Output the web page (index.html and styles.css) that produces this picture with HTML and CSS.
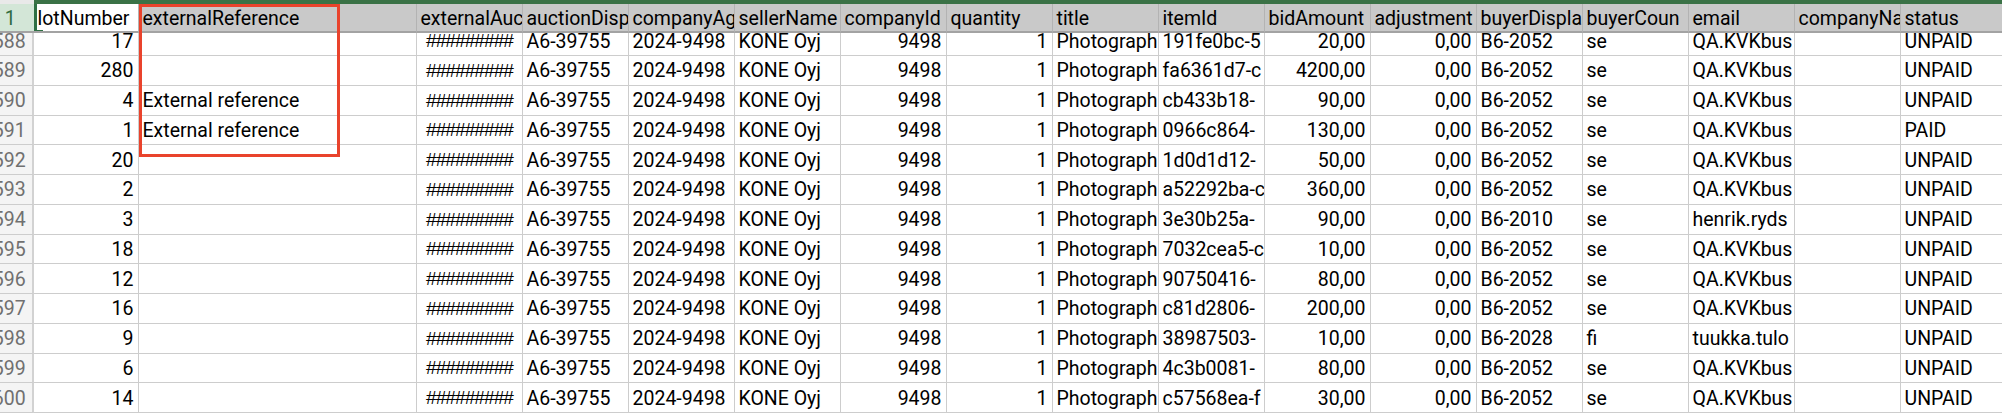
FILE: index.html
```html
<!DOCTYPE html>
<html lang="en">
<head>
<meta charset="utf-8">
<title>Sheet</title>
<link rel="stylesheet" href="styles.css">
</head>
<body>
<div class="topbar"><div class="corner"></div><div class="greenbar"></div></div>
<div class="sheet">
  <div class="row head">
    <div class="rh rh-active">1</div>
    <div class="c active">lotNumber</div>
    <div class="c">externalReference</div>
    <div class="c">externalAuc</div>
    <div class="c">auctionDisp</div>
    <div class="c">companyAg</div>
    <div class="c">sellerName</div>
    <div class="c">companyId</div>
    <div class="c">quantity</div>
    <div class="c">title</div>
    <div class="c">itemId</div>
    <div class="c">bidAmount</div>
    <div class="c">adjustment</div>
    <div class="c">buyerDispla</div>
    <div class="c">buyerCoun</div>
    <div class="c">email</div>
    <div class="c">companyNa</div>
    <div class="c">status</div>
  </div>
  <div class="viewport">
    <div class="rows">
      <div class="row"><div class="rh">588</div><div class="c n">17</div><div class="c"></div><div class="c hash">#########</div><div class="c">A6-39755</div><div class="c">2024-9498</div><div class="c">KONE Oyj</div><div class="c n">9498</div><div class="c n">1</div><div class="c">Photograph</div><div class="c">191fe0bc-5</div><div class="c n">20,00</div><div class="c n">0,00</div><div class="c">B6-2052</div><div class="c">se</div><div class="c">QA.KVKbus</div><div class="c"></div><div class="c">UNPAID</div></div>
      <div class="row"><div class="rh">589</div><div class="c n">280</div><div class="c"></div><div class="c hash">#########</div><div class="c">A6-39755</div><div class="c">2024-9498</div><div class="c">KONE Oyj</div><div class="c n">9498</div><div class="c n">1</div><div class="c">Photograph</div><div class="c">fa6361d7-c</div><div class="c n">4200,00</div><div class="c n">0,00</div><div class="c">B6-2052</div><div class="c">se</div><div class="c">QA.KVKbus</div><div class="c"></div><div class="c">UNPAID</div></div>
      <div class="row"><div class="rh">590</div><div class="c n">4</div><div class="c">External reference</div><div class="c hash">#########</div><div class="c">A6-39755</div><div class="c">2024-9498</div><div class="c">KONE Oyj</div><div class="c n">9498</div><div class="c n">1</div><div class="c">Photograph</div><div class="c">cb433b18-</div><div class="c n">90,00</div><div class="c n">0,00</div><div class="c">B6-2052</div><div class="c">se</div><div class="c">QA.KVKbus</div><div class="c"></div><div class="c">UNPAID</div></div>
      <div class="row"><div class="rh">591</div><div class="c n">1</div><div class="c">External reference</div><div class="c hash">#########</div><div class="c">A6-39755</div><div class="c">2024-9498</div><div class="c">KONE Oyj</div><div class="c n">9498</div><div class="c n">1</div><div class="c">Photograph</div><div class="c">0966c864-</div><div class="c n">130,00</div><div class="c n">0,00</div><div class="c">B6-2052</div><div class="c">se</div><div class="c">QA.KVKbus</div><div class="c"></div><div class="c">PAID</div></div>
      <div class="row"><div class="rh">592</div><div class="c n">20</div><div class="c"></div><div class="c hash">#########</div><div class="c">A6-39755</div><div class="c">2024-9498</div><div class="c">KONE Oyj</div><div class="c n">9498</div><div class="c n">1</div><div class="c">Photograph</div><div class="c">1d0d1d12-</div><div class="c n">50,00</div><div class="c n">0,00</div><div class="c">B6-2052</div><div class="c">se</div><div class="c">QA.KVKbus</div><div class="c"></div><div class="c">UNPAID</div></div>
      <div class="row"><div class="rh">593</div><div class="c n">2</div><div class="c"></div><div class="c hash">#########</div><div class="c">A6-39755</div><div class="c">2024-9498</div><div class="c">KONE Oyj</div><div class="c n">9498</div><div class="c n">1</div><div class="c">Photograph</div><div class="c">a52292ba-c</div><div class="c n">360,00</div><div class="c n">0,00</div><div class="c">B6-2052</div><div class="c">se</div><div class="c">QA.KVKbus</div><div class="c"></div><div class="c">UNPAID</div></div>
      <div class="row"><div class="rh">594</div><div class="c n">3</div><div class="c"></div><div class="c hash">#########</div><div class="c">A6-39755</div><div class="c">2024-9498</div><div class="c">KONE Oyj</div><div class="c n">9498</div><div class="c n">1</div><div class="c">Photograph</div><div class="c">3e30b25a-</div><div class="c n">90,00</div><div class="c n">0,00</div><div class="c">B6-2010</div><div class="c">se</div><div class="c">henrik.ryds</div><div class="c"></div><div class="c">UNPAID</div></div>
      <div class="row"><div class="rh">595</div><div class="c n">18</div><div class="c"></div><div class="c hash">#########</div><div class="c">A6-39755</div><div class="c">2024-9498</div><div class="c">KONE Oyj</div><div class="c n">9498</div><div class="c n">1</div><div class="c">Photograph</div><div class="c">7032cea5-c</div><div class="c n">10,00</div><div class="c n">0,00</div><div class="c">B6-2052</div><div class="c">se</div><div class="c">QA.KVKbus</div><div class="c"></div><div class="c">UNPAID</div></div>
      <div class="row"><div class="rh">596</div><div class="c n">12</div><div class="c"></div><div class="c hash">#########</div><div class="c">A6-39755</div><div class="c">2024-9498</div><div class="c">KONE Oyj</div><div class="c n">9498</div><div class="c n">1</div><div class="c">Photograph</div><div class="c">90750416-</div><div class="c n">80,00</div><div class="c n">0,00</div><div class="c">B6-2052</div><div class="c">se</div><div class="c">QA.KVKbus</div><div class="c"></div><div class="c">UNPAID</div></div>
      <div class="row"><div class="rh">597</div><div class="c n">16</div><div class="c"></div><div class="c hash">#########</div><div class="c">A6-39755</div><div class="c">2024-9498</div><div class="c">KONE Oyj</div><div class="c n">9498</div><div class="c n">1</div><div class="c">Photograph</div><div class="c">c81d2806-</div><div class="c n">200,00</div><div class="c n">0,00</div><div class="c">B6-2052</div><div class="c">se</div><div class="c">QA.KVKbus</div><div class="c"></div><div class="c">UNPAID</div></div>
      <div class="row"><div class="rh">598</div><div class="c n">9</div><div class="c"></div><div class="c hash">#########</div><div class="c">A6-39755</div><div class="c">2024-9498</div><div class="c">KONE Oyj</div><div class="c n">9498</div><div class="c n">1</div><div class="c">Photograph</div><div class="c">38987503-</div><div class="c n">10,00</div><div class="c n">0,00</div><div class="c">B6-2028</div><div class="c">fi</div><div class="c">tuukka.tulo</div><div class="c"></div><div class="c">UNPAID</div></div>
      <div class="row"><div class="rh">599</div><div class="c n">6</div><div class="c"></div><div class="c hash">#########</div><div class="c">A6-39755</div><div class="c">2024-9498</div><div class="c">KONE Oyj</div><div class="c n">9498</div><div class="c n">1</div><div class="c">Photograph</div><div class="c">4c3b0081-</div><div class="c n">80,00</div><div class="c n">0,00</div><div class="c">B6-2052</div><div class="c">se</div><div class="c">QA.KVKbus</div><div class="c"></div><div class="c">UNPAID</div></div>
      <div class="row"><div class="rh">600</div><div class="c n">14</div><div class="c"></div><div class="c hash">#########</div><div class="c">A6-39755</div><div class="c">2024-9498</div><div class="c">KONE Oyj</div><div class="c n">9498</div><div class="c n">1</div><div class="c">Photograph</div><div class="c">c57568ea-f</div><div class="c n">30,00</div><div class="c n">0,00</div><div class="c">B6-2052</div><div class="c">se</div><div class="c">QA.KVKbus</div><div class="c"></div><div class="c">UNPAID</div></div>
    </div>
  </div>
</div>
<div class="annotation"></div>
</body>
</html>
```

FILE: styles.css
```css
html, body {
  margin: 0;
  padding: 0;
  width: 2002px;
  height: 414px;
  overflow: hidden;
  background: #ffffff;
}

body {
  position: relative;
  font-family: Roboto, "Liberation Sans", sans-serif;
  font-size: 19.5px;
  color: #000000;
}

.topbar {
  display: flex;
  height: 4px;
}

.corner {
  width: 33.5px;
  background: #e9e9e9;
}

.greenbar {
  flex: 1;
  background: #3a7246;
}

.sheet {
  --cols: 46.5px 105px 278px repeat(15, 106px);
  margin-left: -13px;
  width: max-content;
}

.row {
  display: grid;
  grid-template-columns: var(--cols);
  height: 29.75px;
}

.row.head {
  height: 29px;
}

.c, .rh {
  box-sizing: border-box;
  display: flex;
  align-items: center;
  overflow: hidden;
  white-space: nowrap;
  border-right: 1px solid #cdcdcd;
  border-bottom: 1px solid #cdcdcd;
  padding: 1px 4px 0;
  min-width: 0;
}

.c.n {
  justify-content: flex-end;
}

.c.hash {
  justify-content: flex-end;
  padding-right: 8.5px;
  font-family: "Liberation Sans", Arial, sans-serif;
  font-size: 19px;
  letter-spacing: -0.9px;
}

.rh {
  justify-content: center;
  padding: 1px 0 0 0;
  background: #f4f4f4;
  color: #707070;
  border-right: 2px solid #d2d2d2;
}

.head .c {
  background: #c9c9c9;
  border-right: 1px solid #b3b3b3;
  border-bottom: 2px solid #a3a3a3;
}

.head .rh-active {
  background: #d3e6d7;
  color: #2f6a40;
  border-bottom: 2px solid #a3a3a3;
  border-right: none;
}

.head .c.active {
  position: relative;
  background: #ffffff;
}

.head .c.active::before {
  content: "";
  position: absolute;
  left: 0;
  top: 0;
  bottom: -2px;
  width: 3px;
  background: #2f7044;
}

.head .c.active::after {
  content: "";
  position: absolute;
  left: 0;
  bottom: -2px;
  width: 9px;
  height: 3px;
  background: #2f7044;
}

.viewport {
  height: 381px;
  overflow: hidden;
}

.rows {
  margin-top: -6.75px;
}

.annotation {
  position: absolute;
  left: 138.5px;
  top: 4px;
  width: 201px;
  height: 153px;
  box-sizing: border-box;
  border: 3px solid #e9432c;
}
```
